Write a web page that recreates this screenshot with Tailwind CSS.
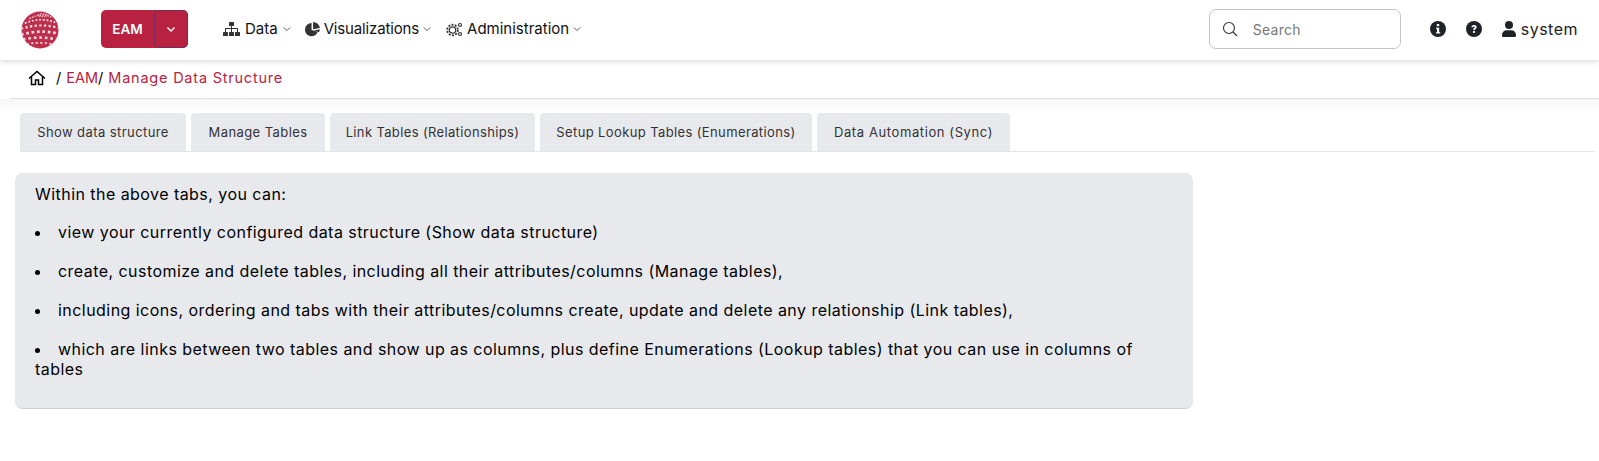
<!DOCTYPE html>
<html lang="en">
  <head>
    <meta charset="UTF-8" />
    <title>Manage Data Structure</title>
    <script src="https://cdn.jsdelivr.net/npm/@tailwindcss/browser@4"></script>
  </head>
  <body class="bg-white font-['Inter',sans-serif] text-black overflow-hidden">
    <!-- top bar -->
    <header class="h-[60px] pb-[2px] flex items-center bg-white shadow-[0_1px_6px_rgba(0,0,0,0.18)] relative">
      <svg class="ml-[21px] mt-[2px] w-[38px] h-[38px]" viewBox="0 0 40 40">
        <defs>
          <clipPath id="ball"><circle cx="20" cy="20" r="19.500" /></clipPath>
          <filter id="soft"><feGaussianBlur stdDeviation="0.35" /></filter>
        </defs>
        <circle cx="20" cy="20" r="19.500" fill="#bd2f4c" />
        <g clip-path="url(#ball)" fill="none" stroke="#f6dde3" filter="url(#soft)">
          <ellipse cx="23" cy="4.500" rx="5" ry="1.500" stroke-width="1" stroke-dasharray="1.500 1.200" />
          <path d="M9 8Q22 1 33 7" stroke-width="1.300" stroke-dasharray="1.500 1.300" />
          <path d="M4 13Q20 6 36 12" stroke-width="1.800" stroke-dasharray="2 1.900" />
          <path d="M0 19Q20 12 40 18" stroke-width="2.300" stroke-dasharray="2.400 2.500" />
          <path d="M0 25Q20 19 40 24" stroke-width="2.800" stroke-dasharray="2.800 2.900" />
          <path d="M2 30Q20 26 38 30" stroke-width="2.600" stroke-dasharray="2.800 3" />
          <path d="M6 35Q20 32 34 35" stroke-width="1.800" stroke-dasharray="2.200 2.600" />
        </g>
      </svg>

      <div class="ml-[42px] w-[87px] h-[38px] flex bg-[#b8213f] rounded-[5px] text-white">
        <span class="w-[53px] flex items-center justify-center text-[13.5px] font-semibold">EAM</span>
        <span class="w-[34px] flex items-center justify-center border border-[#7a2a5a] rounded-[5px]">
          <svg class="w-[10px] h-[10px]" viewBox="0 0 10 10" fill="none" stroke="white" stroke-width="1.4"><path d="M1.500 3.500 5 7l3.500-3.500" /></svg>
        </span>
      </div>

      <nav class="ml-[35px] flex items-center gap-[14px] text-[15px] text-[#111]">
        <a class="flex items-center gap-[5px]">
          <svg class="w-[17px] h-[14px]" viewBox="0 0 17 14" fill="#333"><rect x="6" y="0" width="5" height="4" rx=".6" /><rect x="8" y="4" width="1" height="3" /><rect x="2" y="6" width="13" height="1" /><rect x="2" y="6" width="1" height="4" /><rect x="14" y="6" width="1" height="4" /><rect x="8" y="6" width="1" height="4" /><rect x="0" y="10" width="5" height="4" rx=".6" /><rect x="6" y="10" width="5" height="4" rx=".6" /><rect x="12" y="10" width="5" height="4" rx=".6" /></svg>
          <span>Data</span>
          <svg class="w-[8px] h-[8px]" viewBox="0 0 10 10" fill="none" stroke="#444" stroke-width="1.100"><path d="M1 3l4 4 4-4" /></svg>
        </a>
        <a class="flex items-center gap-[4px]">
          <svg class="w-[15px] h-[15px]" viewBox="0 0 16 16" fill="#333"><path d="M7 1.200a7 7 0 1 0 6.600 9.300L7 8.400Z" /><path d="M8.600 0a7.400 7.400 0 0 1 7.300 6.400L8.600 7.600Z" /><path d="M9.600 8.700 16 7.900a7.400 7.400 0 0 1-1.300 3.100Z" /></svg>
          <span class="tracking-[-0.15px]">Visualizations</span>
          <svg class="w-[8px] h-[8px]" viewBox="0 0 10 10" fill="none" stroke="#444" stroke-width="1.100"><path d="M1 3l4 4 4-4" /></svg>
        </a>
        <a class="ml-[1px] flex items-center gap-[4px]">
          <svg class="w-[17px] h-[15px]" viewBox="0 0 17 15" fill="none" stroke="#333"><circle cx="6.500" cy="8" r="3.200" stroke-width="1.200" /><circle cx="6.500" cy="8" r="5.300" stroke-width="1.800" stroke-dasharray="2 1.330" /><circle cx="14" cy="3" r="1.500" stroke-width="1.200" /><circle cx="14" cy="12" r="1.500" stroke-width="1.200" /></svg>
          <span>Administration</span>
          <svg class="w-[8px] h-[8px]" viewBox="0 0 10 10" fill="none" stroke="#444" stroke-width="1.100"><path d="M1 3l4 4 4-4" /></svg>
        </a>
      </nav>

      <div class="ml-auto w-[192px] h-[40px] flex items-center border border-[#c4c4c4] rounded-[7px]">
        <svg class="ml-[12px] w-[16px] h-[16px]" viewBox="0 0 16 16" fill="none" stroke="#333" stroke-width="1.100"><circle cx="7" cy="7" r="5.500" /><path d="m11 11 4 4" /></svg>
        <span class="ml-[15px] text-[14px] tracking-[0.3px] text-[#777]">Search</span>
      </div>
      <svg class="ml-[29px] w-[16px] h-[16px]" viewBox="0 0 16 16"><circle cx="8" cy="8" r="8" fill="#1f2328" /><rect x="6.800" y="3" width="2.400" height="2.200" fill="white" /><path d="M6 6.800h3.200v4.400H10.200v1.300H6v-1.300h1v-3.100H6Z" fill="white" /></svg>
      <svg class="ml-[20px] w-[16px] h-[16px]" viewBox="0 0 16 16"><circle cx="8" cy="8" r="8" fill="#1f2328" /><path d="M5.400 6.200C5.500 4.700 6.600 3.900 8.100 3.900c1.500 0 2.600.9 2.600 2.200 0 1.800-1.800 1.800-1.800 3H7.200c0-2.200 1.700-2.200 1.700-3 0-.4-.3-.7-.8-.7-.6 0-.9.300-1 .9Z" fill="white" /><rect x="7.100" y="10" width="1.900" height="1.900" fill="white" /></svg>
      <svg class="ml-[20px] w-[14px] h-[16px]" viewBox="0 0 14 16" fill="#1f2328"><circle cx="7" cy="4" r="4" /><path d="M0 14.500C0 11.500 2 9.300 4.500 9.300h5c2.500 0 4.500 2.200 4.500 5.200 0 1-.6 1.500-1.500 1.500h-11C.6 16 0 15.500 0 14.500Z" /></svg>
      <span class="ml-[5px] mr-[21px] text-[16px] tracking-[0.5px] text-[#222]">system</span>
    </header>

    <!-- breadcrumb -->
    <div class="ml-[10px] h-[39px] pb-[2px] flex items-center border-b border-[#dcdce4] text-[14.5px]">
      <svg class="ml-[18px] w-[18px] h-[16px]" viewBox="0 0 18 16" fill="none" stroke="#000" stroke-width="1.500"><path d="M1 8.500 9 1.500l8 7" /><path d="M3.500 7v7.500h4v-4.500h3v4.500h4V7" /></svg>
      <span class="ml-[10px] text-black">/</span>
      <a class="ml-[5px] text-[#b8213f]">EAM</a>
      <span class="text-black">/</span>
      <a class="ml-[5px] tracking-[0.78px] text-[#b8213f]">Manage Data Structure</a>
    </div>
    <div class="h-[14px] bg-gradient-to-b from-[#f6f6f6] to-white"></div>

    <!-- tabs -->
    <div class="ml-[20px] mr-[4px] flex gap-[5px] border-b border-[#e4e4e8] text-[13px] tracking-[0.42px] text-[#333]">
      <a class="h-[38px] w-[166px] pt-[2px] flex items-center justify-center bg-[#e8e9ed] rounded-t-[4px]">Show data structure</a>
      <a class="h-[38px] w-[134px] pt-[2px] flex items-center justify-center bg-[#e8e9ed] rounded-t-[4px]">Manage Tables</a>
      <a class="h-[38px] w-[205px] pt-[2px] flex items-center justify-center bg-[#e8e9ed] rounded-t-[4px] tracking-[0.36px]">Link Tables (Relationships)</a>
      <a class="h-[38px] w-[272px] pt-[2px] flex items-center justify-center bg-[#e8e9ed] rounded-t-[4px] tracking-[0.38px]">Setup Lookup Tables (Enumerations)</a>
      <a class="h-[38px] w-[193px] pt-[2px] flex items-center justify-center bg-[#e8e9ed] rounded-t-[4px] tracking-[0.6px]">Data Automation (Sync)</a>
    </div>

    <!-- info panel -->
    <div class="mt-[21px] ml-[15px] w-[1178px] h-[236px] px-[20px] pt-[11px] bg-[#e8e9ed] rounded-[8px] border-b border-[#cfcfd3] text-[16px] tracking-[0.45px] leading-[20px] text-black">
      <p>Within the above tabs, you can:</p>
      <ul class="mt-[18px] list-disc list-inside marker:text-[17px]">
        <li class="mb-[19px]">view your currently configured data structure (Show data structure)</li>
        <li class="mb-[19px]">create, customize and delete tables, including all their attributes/columns (Manage tables),</li>
        <li class="mb-[19px]">including icons, ordering and tabs with their attributes/columns create, update and delete any relationship (Link tables),</li>
        <li>which are links between two tables and show up as columns, plus define Enumerations (Lookup tables) that you can use in columns of tables</li>
      </ul>
    </div>
  </body>
</html>
